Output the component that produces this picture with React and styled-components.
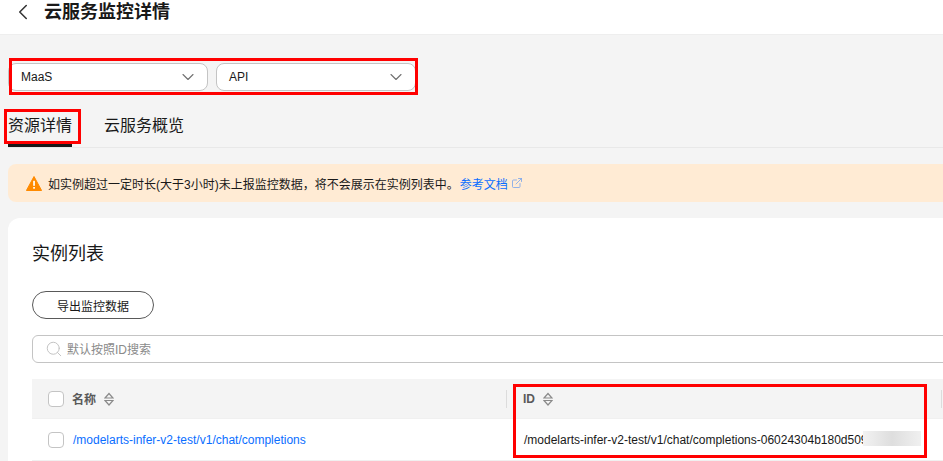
import React from 'react';
import styled, { createGlobalStyle } from 'styled-components';
import { ChevronDown, ChevronLeft, Search, ExternalLink } from 'lucide-react';

const GlobalStyle = createGlobalStyle`
  * { box-sizing: border-box; }
  html, body { margin: 0; height: 100%; overflow: hidden; }
  body {
    background: #f4f4f4;
    color: #191919;
    font-family: "Liberation Sans", "Noto Sans CJK SC", sans-serif;
  }
`;

const Page = styled.div`
  position: relative;
  width: 943px;
  height: 461px;
  overflow: hidden;
`;

const Header = styled.header`
  height: 35px;
  display: flex;
  align-items: center;
  gap: 8px;
  padding: 0 0 11px 10px;
  background: #fff;
  border-bottom: 1px solid #eee;
  svg { flex: none; }
`;

const Title = styled.h1`
  margin: 0;
  font-size: 18px;
  line-height: 24px;
  font-weight: 700;
  color: #191919;
`;

const Main = styled.main`
  width: 970px;
  padding: 28px 0 0 8px;
`;

const Selects = styled.div`
  display: flex;
  gap: 8px;
`;

const Select = styled.div`
  width: 200px;
  height: 28px;
  display: flex;
  align-items: center;
  justify-content: space-between;
  padding: 0 9px 0 12px;
  background: #fff;
  border: 1px solid #c4c4c4;
  border-radius: 8px;
  font-size: 12px;
  color: #191919;
  svg { color: #707070; }
`;

const Tabs = styled.nav`
  display: flex;
  gap: 32px;
  height: 57px;
  padding-top: 20px;
  border-bottom: 1px solid #e8e8e8;
`;

const Tab = styled.div`
  height: 36px;
  padding-top: 4px;
  font-size: 16px;
  line-height: 22px;
  color: #191919;
  border-bottom: ${(p) => (p.$active ? '3px solid #191919' : 'none')};
`;

const Notice = styled.div`
  height: 38px;
  margin-top: 16px;
  display: flex;
  align-items: center;
  gap: 6px;
  padding-left: 18px;
  background: #ffebd4;
  border-radius: 8px;
  font-size: 12px;
  color: #191919;
`;

const NoticeText = styled.span`
  display: flex;
  align-items: center;
`;

const DocLink = styled.a`
  display: inline-flex;
  align-items: center;
  gap: 3px;
  color: #0a6eff;
  margin-left: 1px;
  svg { color: #6d9fee; }
`;

const Card = styled.section`
  margin-top: 16px;
  height: 300px;
  padding: 24px 0 0 24px;
  background: #fff;
  border-radius: 12px;
`;

const CardTitle = styled.h2`
  margin: 0;
  font-size: 18px;
  line-height: 24px;
  font-weight: 400;
  color: #191919;
`;

const ExportButton = styled.button`
  display: block;
  width: 122px;
  height: 28px;
  margin-top: 25px;
  padding: 0;
  background: #fff;
  border: 1px solid #595959;
  border-radius: 14px;
  font: inherit;
  font-size: 12px;
  color: #191919;
`;

const SearchBox = styled.div`
  height: 28px;
  margin-top: 16px;
  display: flex;
  align-items: center;
  gap: 4px;
  padding: 0 0 1px 12px;
  border: 1px solid #c4c4c4;
  border-radius: 6px;
  font-size: 12px;
  color: #8a8a8a;
  svg { color: #c2c2c2; }
`;

const Table = styled.div`
  margin-top: 16px;
`;

const Row = styled.div`
  display: grid;
  grid-template-columns: 474px 435px 1fr;
  align-items: center;
  height: ${(p) => (p.$head ? '40px' : '42px')};
  background: ${(p) => (p.$head ? '#f4f4f4' : '#fff')};
  border-bottom: 1px solid #f0f0f0;
  font-size: 12px;
`;

const Cell = styled.div`
  position: relative;
  display: flex;
  align-items: center;
  height: ${(p) => (p.$divider ? '18px' : '100%')};
  gap: 8px;
  padding-left: ${(p) => (p.$divider ? '16px' : p.$first ? '16px' : '18px')};
  font-weight: ${(p) => (p.$head ? 700 : 400)};
  color: ${(p) => (p.$head ? '#595959' : '#191919')};
  white-space: nowrap;
  border-left: ${(p) => (p.$divider ? '1px solid #dcdcdc' : 'none')};
`;

const Checkbox = styled.span`
  flex: none;
  width: 16px;
  height: 16px;
  background: #fff;
  border: 1px solid #c4c4c4;
  border-radius: 4px;
`;

const NameLink = styled.a`
  margin-left: 1px;
  color: #0a6eff;
`;

const Blur = styled.span`
  position: absolute;
  left: 357px;
  top: 12px;
  width: 58px;
  height: 15px;
  background: linear-gradient(90deg, #f2f2f2, #dedede 50%, #f0f0f0);
`;

const Mark = styled.div`
  position: absolute;
  border: 3px solid #f00;
  left: ${(p) => p.$x}px;
  top: ${(p) => p.$y}px;
  width: ${(p) => p.$w}px;
  height: ${(p) => p.$h}px;
`;

const SortIcon = () => (
  <svg width="10" height="14" viewBox="0 0 10 14" fill="none" stroke="#8a8a8a" strokeWidth="1.2" style={{ flex: 'none' }}>
    <path d="M1 6 5 1.5 9 6Z" />
    <path d="M1 8.5 5 13 9 8.5Z" />
  </svg>
);

const WarnIcon = () => (
  <svg width="16" height="15" viewBox="0 0 16 15" style={{ flex: 'none' }}>
    <path d="M8 0.5 15.6 14.5H0.4Z" fill="#ff8a00" stroke="#ff8a00" strokeLinejoin="round" />
    <rect x="7.2" y="4.8" width="1.7" height="5" fill="#fff" />
    <rect x="7.2" y="11" width="1.7" height="1.7" fill="#fff" />
  </svg>
);

const App = () => {
  return (
    <Page>
      <GlobalStyle />
      <Header>
        <ChevronLeft size={26} strokeWidth={1.4} color="#333" />
        <Title>云服务监控详情</Title>
      </Header>
      <Main>
        <Selects>
          <Select>
            MaaS
            <ChevronDown size={20} strokeWidth={1.3} />
          </Select>
          <Select>
            API
            <ChevronDown size={20} strokeWidth={1.3} />
          </Select>
        </Selects>
        <Tabs>
          <Tab $active>资源详情</Tab>
          <Tab>云服务概览</Tab>
        </Tabs>
        <Notice>
          <WarnIcon />
          <NoticeText>
            如实例超过一定时长(大于3小时)未上报监控数据，将不会展示在实例列表中。
            <DocLink>
              参考文档
              <ExternalLink size={12} strokeWidth={1.5} />
            </DocLink>
          </NoticeText>
        </Notice>
        <Card>
          <CardTitle>实例列表</CardTitle>
          <ExportButton>导出监控数据</ExportButton>
          <SearchBox>
            <Search size={18} strokeWidth={1.3} />
            默认按照ID搜索
          </SearchBox>
          <Table>
            <Row $head>
              <Cell $head $first>
                <Checkbox />
                名称
                <SortIcon />
              </Cell>
              <Cell $head $divider>
                ID
                <SortIcon />
              </Cell>
              <Cell $head $divider />
            </Row>
            <Row>
              <Cell $first>
                <Checkbox />
                <NameLink>/modelarts-infer-v2-test/v1/chat/completions</NameLink>
              </Cell>
              <Cell>
                /modelarts-infer-v2-test/v1/chat/completions-06024304b180d509
                <Blur />
              </Cell>
              <Cell />
            </Row>
          </Table>
        </Card>
      </Main>
      <Mark $x={9} $y={58} $w={409} $h={37} />
      <Mark $x={4} $y={109} $w={77} $h={35} />
      <Mark $x={513} $y={384} $w={414} $h={74} />
    </Page>
  );
};

export default App;
